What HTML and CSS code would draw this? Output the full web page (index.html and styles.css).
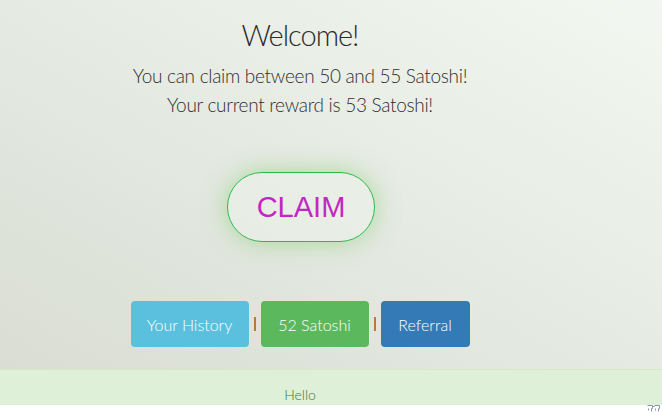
FILE: index.html
```html
<!DOCTYPE html>
<html lang="en">
<head>
<meta charset="utf-8">
<title>Welcome</title>
<link rel="stylesheet" href="styles.css">
</head>
<body>
<main class="page">
  <section class="intro">
    <h1 class="title">Welcome!</h1>
    <p class="lead">You can claim between 50 and 55 Satoshi!<br>Your current reward is 53 Satoshi!</p>
  </section>
  <div class="claim-wrap">
    <button class="claim" type="button">CLAIM</button>
  </div>
  <nav class="actions">
    <a class="btn btn-info" href="#">Your History</a>
    <span class="sep" aria-hidden="true"></span>
    <a class="btn btn-success" href="#">52 Satoshi</a>
    <span class="sep" aria-hidden="true"></span>
    <a class="btn btn-primary" href="#">Referral</a>
  </nav>
</main>
<footer class="footer">
  <div class="footer-inner">Hello</div>
</footer>
<div class="bottom">
  <svg class="badge" width="13" height="7" viewBox="0 0 13 7" aria-hidden="true">
    <path d="M0.5 0.5h5v3h-1v3M7.5 0.5h5v3h-1v3M5.5 1.5h2M1.5 3.5v2M8.5 3.5v2" fill="none" stroke="#8a94a8" stroke-width="1"/>
  </svg>
</div>
</body>
</html>
```

FILE: styles.css
```css
html, body {
  margin: 0;
  padding: 0;
}
body {
  font-family: Lato, "Open Sans", sans-serif;
  background: #ffffff;
  color: #333;
}
.page {
  height: 369px;
  box-sizing: border-box;
  background: linear-gradient(to top right, #d9ddd3 0%, #e4e9e1 45%, #f3f7f1 100%);
  display: flex;
  flex-direction: column;
  width: 100%;
}
.intro {
  width: 600px;
  text-align: center;
  padding-top: 17px;
}
.title {
  margin: 0;
  font-size: 29px;
  line-height: 36px;
  font-weight: 300;
  letter-spacing: -1px;
  color: #2a2a2a;
}
.lead {
  margin: 8px 0 0;
  font-size: 19px;
  line-height: 29px;
  font-weight: 300;
  letter-spacing: -0.3px;
  color: #2f2f2f;
}
.claim-wrap {
  width: 600px;
  display: flex;
  justify-content: center;
  margin-top: 53px;
}
.claim {
  box-sizing: border-box;
  width: 148px;
  height: 70px;
  margin-left: 2px;
  border: 1px solid #2db84a;
  border-radius: 35px;
  background: rgba(235, 242, 232, 0.6);
  box-shadow: 0 0 24px rgba(110, 200, 90, 0.5);
  font-family: "Liberation Sans", Arial, sans-serif;
  font-size: 29px;
  color: #c327c3;
  padding: 0;
  cursor: pointer;
}
.actions {
  width: 600px;
  display: flex;
  justify-content: center;
  align-items: center;
  gap: 5px;
  margin-top: 59px;
}
.btn {
  display: flex;
  align-items: center;
  justify-content: center;
  height: 46px;
  box-sizing: border-box;
  border-radius: 4px;
  color: #ffffff;
  text-decoration: none;
  font-size: 16px;
  font-weight: 300;
}
.btn-info { background: #5bc0de; width: 118px; }
.btn-success { background: #5cb85c; width: 108px; }
.btn-primary { background: #337ab7; width: 89px; }
.sep {
  width: 2px;
  height: 14px;
  background: #b87a38;
}
.footer {
  height: 36px;
  background: #dff0d8;
  border-top: 1px solid #d6e9c6;
  box-sizing: border-box;
}
.footer-inner {
  width: 600px;
  text-align: center;
  padding-top: 16px;
  font-size: 14px;
  line-height: 18px;
  font-weight: 300;
  color: #3c763d;
}
.bottom {
  height: 9px;
  display: flex;
  justify-content: flex-end;
  align-items: flex-start;
  padding-right: 2px;
}
.badge {
  display: block;
}
```
